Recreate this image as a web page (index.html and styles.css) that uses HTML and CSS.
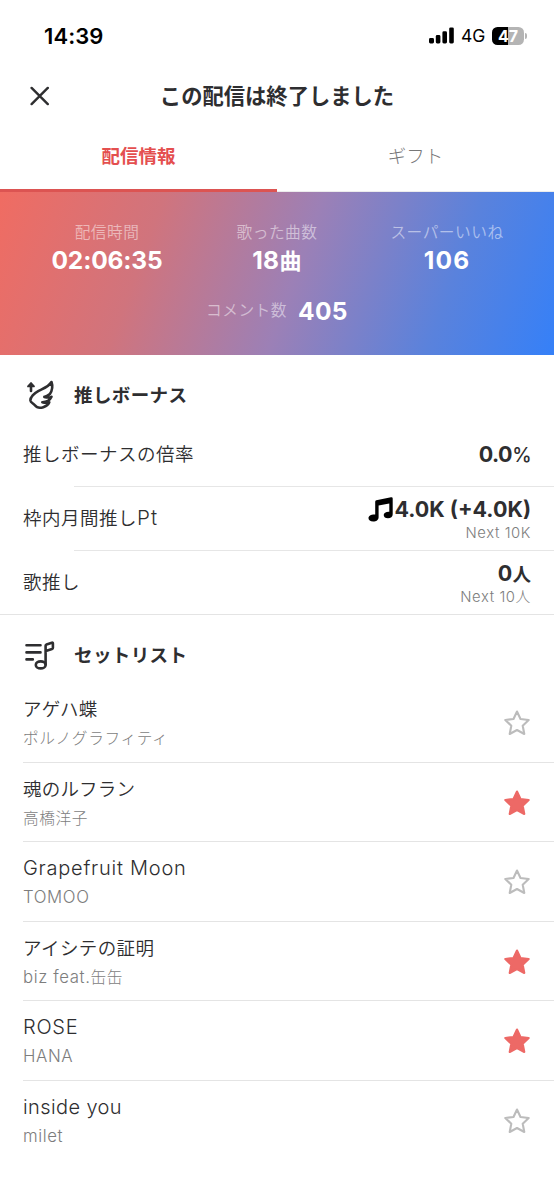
FILE: index.html
```html
<!DOCTYPE html>
<html lang="ja">
<head>
<meta charset="utf-8">
<title>この配信は終了しました</title>
<link rel="stylesheet" href="styles.css">
</head>
<body>
<div class="status">
  <span class="clock">14:39</span>
  <div class="indicators">
    <svg class="signal" width="26" height="17" viewBox="0 0 26 17"><rect x="0" y="11" width="5" height="5.5" rx="1.4"/><rect x="6.8" y="8" width="4.6" height="8.5" rx="1.4"/><rect x="13.4" y="4.3" width="4.6" height="12.2" rx="1.4"/><rect x="20.2" y="0.4" width="4.6" height="16.1" rx="1.4"/></svg>
    <span class="network">4G</span>
    <div class="battery"><span>47</span></div>
    <i class="battery-cap"></i>
  </div>
</div>
<header class="header">
  <svg class="close" width="20" height="20" viewBox="0 0 20 20"><path d="M1.6 1.9L17.8 18.1M17.8 1.9L1.6 18.1"/></svg>
  <h1>この配信は終了しました</h1>
</header>
<nav class="tabs">
  <div class="tab active">配信情報</div>
  <div class="tab">ギフト</div>
</nav>
<section class="stats">
  <div class="stat-grid">
    <div class="stat"><span class="label">配信時間</span><strong class="time">02:06:35</strong></div>
    <div class="stat"><span class="label">歌った曲数</span><strong>18<span class="unit">曲</span></strong></div>
    <div class="stat"><span class="label">スーパーいいね</span><strong class="likes">106</strong></div>
  </div>
  <div class="comments"><span class="label">コメント数</span><strong>405</strong></div>
</section>
<section class="bonus">
  <div class="section-head">
    <svg class="icon" width="34" height="34" viewBox="0 0 34 34"><path d="M8 13V7"/><path d="M5 8.4L8 5L11 8.4Z" class="solid"/><path d="M21.3 18.9Q24.8 18.2 26.9 16C29.3 12.4 29.7 7.6 28.5 4C25.5 9 20.3 10.5 15.6 12.8C11.1 15.2 7.1 19.4 7.4 22.4C7.7 24.8 10.2 25 11.9 27.3C13.6 29.6 17.1 30.2 20.3 29.2C23.1 28.4 25.3 26.6 26.3 24.2Q23.3 25.4 19.3 24.2Q26.1 24.2 28.5 18.8Q25.8 20.2 21.3 18.9"/></svg>
    <h2>推しボーナス</h2>
  </div>
  <div class="row"><span class="name">推しボーナスの倍率</span><div class="value"><b class="rate">0.0<span class="percent">%</span></b></div></div>
  <div class="row"><span class="name">枠内月間推し<span class="pt">Pt</span></span><div class="value double"><div class="points"><svg width="25" height="25" viewBox="0 0 25 25"><path d="M7.2 4.7Q7.2 3.5 8.3 3.2L23 .3Q24.7 0 24.7 1.5V17.3C24.7 19.8 22.7 21.3 20 21.3C17.4 21.3 15.7 20 15.7 18C15.7 16 18 14.6 21.3 14.8V6.4L10.6 8.6V20.2C10.6 22.9 8.2 24.5 5.2 24.5C2.3 24.5.5 23.1.5 21.2C.5 18.9 3.3 17.3 7.2 17.6Z"/></svg><b class="pts">4.0K (+4.0K)</b></div><small>Next 10K</small></div></div>
  <div class="row"><span class="name">歌推し</span><div class="value double"><b>0<span class="person">人</span></b><small>Next 10人</small></div></div>
</section>
<section class="setlist">
  <div class="section-head">
    <svg class="icon" width="34" height="34" viewBox="0 0 34 34"><path d="M3.5 7.3H17.5M3.5 14.4H17.5M3.5 21.4H9.8M22.6 26.4V7.7Q22.6 6.7 23.5 6.4L28.9 4.7Q29.9 4.5 29.9 5.6V9.8Q29.9 10.7 29 11L22.8 12.9"/><ellipse cx="17.7" cy="26.9" rx="4.9" ry="3.5"/></svg>
    <h2>セットリスト</h2>
  </div>
  <ul>
    <li><div><p class="song">アゲハ蝶</p><p class="artist">ポルノグラフィティ</p></div><svg class="star" viewBox="0 0 28 28"><path d="M14 2.5L17.5 10L25.7 11L19.7 16.7L21.3 25L14 21L6.7 25L8.3 16.7L2.3 11L10.5 10Z"/></svg></li>
    <li><div><p class="song">魂のルフラン</p><p class="artist">高橋洋子</p></div><svg class="star on" viewBox="0 0 28 28"><path d="M14 2.5L17.5 10L25.7 11L19.7 16.7L21.3 25L14 21L6.7 25L8.3 16.7L2.3 11L10.5 10Z"/></svg></li>
    <li><div><p class="song latin">Grapefruit Moon</p><p class="artist latin">TOMOO</p></div><svg class="star" viewBox="0 0 28 28"><path d="M14 2.5L17.5 10L25.7 11L19.7 16.7L21.3 25L14 21L6.7 25L8.3 16.7L2.3 11L10.5 10Z"/></svg></li>
    <li><div><p class="song wide">アイシテの証明</p><p class="artist latin">biz feat.<span class="kanji">缶缶</span></p></div><svg class="star on" viewBox="0 0 28 28"><path d="M14 2.5L17.5 10L25.7 11L19.7 16.7L21.3 25L14 21L6.7 25L8.3 16.7L2.3 11L10.5 10Z"/></svg></li>
    <li><div><p class="song latin">ROSE</p><p class="artist latin">HANA</p></div><svg class="star on" viewBox="0 0 28 28"><path d="M14 2.5L17.5 10L25.7 11L19.7 16.7L21.3 25L14 21L6.7 25L8.3 16.7L2.3 11L10.5 10Z"/></svg></li>
    <li><div><p class="song latin tight">inside you</p><p class="artist latin">milet</p></div><svg class="star" viewBox="0 0 28 28"><path d="M14 2.5L17.5 10L25.7 11L19.7 16.7L21.3 25L14 21L6.7 25L8.3 16.7L2.3 11L10.5 10Z"/></svg></li>
  </ul>
</section>
</body>
</html>
```

FILE: styles.css
```css
* { box-sizing: border-box; margin: 0; padding: 0; }
body {
  width: 554px;
  height: 1199px;
  overflow: hidden;
  background: #fff;
  color: #2e2e30;
  font-family: Inter, "Noto Sans CJK JP", sans-serif;
}
.status {
  height: 64px;
  padding: 7px 27px 0 44px;
  display: flex;
  align-items: center;
  justify-content: space-between;
  color: #000;
}
.clock { font-size: 22px; font-weight: 600; letter-spacing: .1px; }
.indicators { display: flex; align-items: center; }
.network { margin-left: 6px; width: 25px; font-size: 17.5px; line-height: 20px; white-space: nowrap; }
.battery {
  width: 32px;
  height: 18px;
  margin-left: 6px;
  border-radius: 5.5px;
  background: linear-gradient(90deg, #000 49%, #b4b4b4 49%);
  color: #fff;
  font-size: 16px;
  font-weight: 700;
  line-height: 18px;
  text-align: center;
}
.battery-cap { width: 2px; height: 6px; margin-left: 1px; border-radius: 0 2px 2px 0; background: #b4b4b4; }
.header {
  height: 64px;
  padding: 0 30px;
  display: grid;
  grid-template-columns: 20px 1fr 20px;
  align-items: center;
}
.close { fill: none; stroke: #2e2e30; stroke-width: 2.4; stroke-linecap: round; }
h1 { font-size: 21.3px; font-weight: 700; line-height: 30px; text-align: center; white-space: nowrap; }
.tabs { height: 64px; display: flex; }
.tab {
  flex: 1;
  padding-bottom: 4px;
  border-bottom: 1px solid #ececec;
  text-align: center;
  font-size: 18.5px;
  line-height: 56px;
  font-weight: 300;
  color: #777;
}
.tab.active { border-bottom: 3px solid #dc5452; color: #e44f4f; font-weight: 700; }
.stats {
  height: 163px;
  padding: 29px 22px 0;
  background: linear-gradient(110deg, #f06c62 0%, #d0747d 27%, #9c80b6 53%, #5a82dc 79%, #3580f8 100%);
  color: #fff;
}
.stat-grid { display: grid; grid-template-columns: repeat(3, 1fr); }
.stat { display: flex; flex-direction: column; align-items: center; }
.label { font-size: 15.7px; font-weight: 350; line-height: 24px; letter-spacing: .5px; color: rgba(255,255,255,.5); }
.stats strong { font-size: 24.5px; font-weight: 650; line-height: 31px; letter-spacing: .4px; }
.stats .time { letter-spacing: -.15px; }
.stats .likes { letter-spacing: 1.2px; }
.stats .unit { font-size: 22px; font-weight: 700; line-height: 1; }
.comments { height: 32px; margin-top: 19px; display: flex; justify-content: center; align-items: center; gap: 11px; }
.section-head { display: flex; align-items: center; gap: 17px; padding-left: 23px; }
.icon { fill: none; stroke: #2e2e30; stroke-width: 2.6; stroke-linecap: round; stroke-linejoin: round; }
.icon .solid { fill: #2e2e30; stroke-width: 1.8; }
h2 { font-size: 18.5px; font-weight: 700; letter-spacing: .4px; line-height: 28px; }
.bonus { height: 260px; border-bottom: 1px solid #e4e4e4; }
.bonus .section-head { height: 68px; padding-top: 11px; }
.row {
  height: 64px;
  padding: 0 23px 2px 23px;
  display: flex;
  justify-content: space-between;
  align-items: center;
  background: linear-gradient(#e6e6e6, #e6e6e6) 74px 100% / 480px 1px no-repeat;
}
.row:last-child { height: 63px; padding-bottom: 1px; background: none; }
.name { font-size: 18.5px; font-weight: 350; letter-spacing: .5px; line-height: 28px; }
.name .pt { font-size: 20.5px; line-height: 1; letter-spacing: 1.1px; font-weight: 320; }
.value { display: flex; flex-direction: column; align-items: flex-end; }
.value.double { padding-top: 3px; }
.value b { font-size: 21.5px; font-weight: 650; line-height: 26px; letter-spacing: .1px; }
.value .rate { letter-spacing: -.5px; }
.value .pts { letter-spacing: 0; }
.value .percent { font-size: 19.5px; font-weight: 450; }
.value small { font-size: 14.8px; font-weight: 300; line-height: 22px; letter-spacing: .6px; color: #7d7d7d; }
.value .person { font-size: 18.5px; font-weight: 700; line-height: 1; }
.points { height: 26px; display: flex; align-items: center; gap: 1px; }
.points svg { margin-top: 2px; }
.setlist .section-head { height: 68px; padding-top: 11px; }
ul { list-style: none; padding-left: 23px; }
li {
  height: 79.55px;
  padding: 11px 23px 0 0;
  display: flex;
  justify-content: space-between;
  border-bottom: 1px solid #e4e4e4;
}
li:last-child { border-bottom: 0; }
.song { font-size: 18.5px; line-height: 30px; letter-spacing: .2px; font-weight: 350; }
.song.wide { letter-spacing: .4px; }
.artist { font-size: 15.7px; line-height: 29px; letter-spacing: .6px; font-weight: 320; color: #7d7d7d; }
.song.latin { font-size: 20px; letter-spacing: .75px; font-weight: 320; }
.song.latin.tight { letter-spacing: .4px; }
.artist.latin { font-size: 16.8px; letter-spacing: .6px; }
.artist .kanji { font-size: 15.7px; }
.star { width: 28px; height: 28px; margin-top: 15px; fill: none; stroke: #bcbcbc; stroke-width: 2.1; stroke-linejoin: round; }
.star.on { fill: #ed6966; stroke: #ed6966; }
```
